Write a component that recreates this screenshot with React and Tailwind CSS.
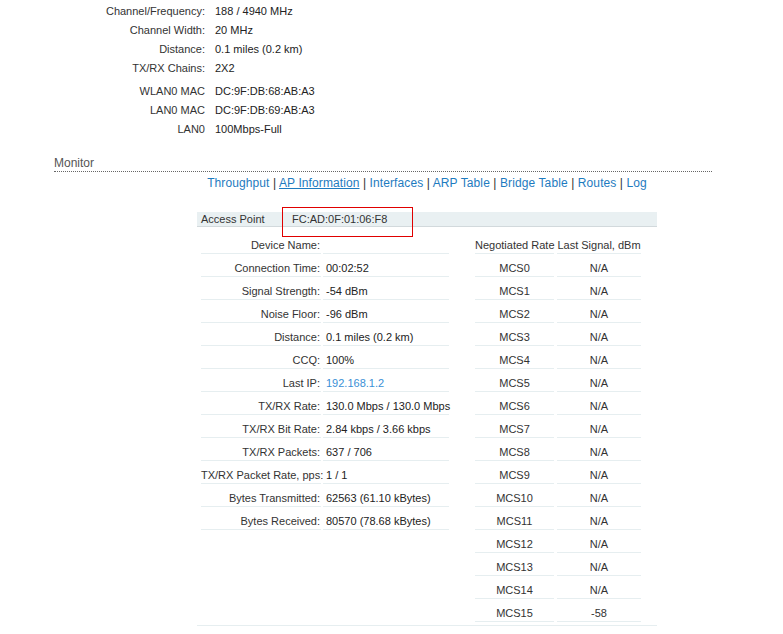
import React from "react";

const topRows = [
  ["Channel/Frequency:", "188 / 4940 MHz"],
  ["Channel Width:", "20 MHz"],
  ["Distance:", "0.1 miles (0.2 km)"],
  ["TX/RX Chains:", "2X2"],
];

const macRows = [
  ["WLAN0 MAC", "DC:9F:DB:68:AB:A3"],
  ["LAN0 MAC", "DC:9F:DB:69:AB:A3"],
  ["LAN0", "100Mbps-Full"],
];

const stationRows = [
  ["Device Name:", ""],
  ["Connection Time:", "00:02:52"],
  ["Signal Strength:", "-54 dBm"],
  ["Noise Floor:", "-96 dBm"],
  ["Distance:", "0.1 miles (0.2 km)"],
  ["CCQ:", "100%"],
  ["Last IP:", "192.168.1.2", true],
  ["TX/RX Rate:", "130.0 Mbps / 130.0 Mbps"],
  ["TX/RX Bit Rate:", "2.84 kbps / 3.66 kbps"],
  ["TX/RX Packets:", "637 / 706"],
  ["TX/RX Packet Rate, pps:", "1 / 1"],
  ["Bytes Transmitted:", "62563 (61.10 kBytes)"],
  ["Bytes Received:", "80570 (78.68 kBytes)"],
];

const rates = Array.from({ length: 16 }, (_, i) => ["MCS" + i, i === 15 ? "-58" : "N/A"]);

const links = ["Throughput", "AP Information", "Interfaces", "ARP Table", "Bridge Table", "Routes", "Log"];

const Cell = ({ className = "", children }) => (
  <div className={"h-[21px] pt-[4px] leading-[16px] border-b border-[#e6eef0] mb-[2px] whitespace-nowrap " + className}>
    {children}
  </div>
);

export default function App() {
  return (
    <div className="font-['Liberation_Sans',Arial,sans-serif] text-[11px] text-[#333] bg-white w-[783px] h-[634px] overflow-hidden">
      {/* device info */}
      <div className="pt-[2px]">
        {topRows.map(([k, v]) => (
          <div key={k} className="flex h-[19px] leading-[19px]">
            <div className="w-[205px] text-right">{k}</div>
            <div className="pl-[10px] text-[#222]">{v}</div>
          </div>
        ))}
        <div className="mt-[4px]">
          {macRows.map(([k, v]) => (
            <div key={k} className="flex h-[19px] leading-[19px]">
              <div className="w-[205px] text-right">{k}</div>
              <div className="pl-[10px] text-[#222]">{v}</div>
            </div>
          ))}
        </div>
      </div>

      {/* monitor */}
      <div className="ml-[54px] w-[658px] mt-[16px]">
        <div className="text-[12px] leading-[16px] text-[#555] border-b border-dotted border-[#666]">Monitor</div>
        <div className="ml-[143px] w-[460px]">
          <div className="mt-[3px] h-[16px] leading-[16px] text-[12px] tracking-[0.1px] text-center whitespace-nowrap">
            {links.map((l, i) => (
              <span key={l}>
                {i > 0 && <span className="text-[#333]"> | </span>}
                <a className={"text-[#1e7bc0] " + (l === "AP Information" ? "underline" : "")}>{l}</a>
              </span>
            ))}
          </div>

          <div className="relative mt-[21px] h-[15px] leading-[14px] bg-[#e9f0f2] border-b border-[#d2d9dc] flex">
            <div className="pl-[4px] w-[95px]">Access Point</div>
            <div>FC:AD:0F:01:06:F8</div>
            <div className="absolute left-[85px] top-[-5px] w-[131px] h-[30px] border border-[#e00000]" />
          </div>

          <div className="mt-[6px] px-[4px] flex border-b border-[#e6eef0] pb-[1px]">
            <div className="w-[248px] flex gap-[2px]">
              <div className="w-[120px]">
                {stationRows.map(([k]) => (
                  <Cell key={k} className="text-right pr-[1px]">{k}</Cell>
                ))}
              </div>
              <div className="w-[126px]">
                {stationRows.map(([k, v, link]) => (
                  <Cell key={k} className={"pl-[3px] " + (link ? "text-[#3a8fd6]" : "text-[#222]")}>{v}</Cell>
                ))}
              </div>
            </div>
            <div className="ml-[26px] flex gap-[3px]">
              <div className="w-[79px] text-center">
                <Cell>Negotiated Rate</Cell>
                {rates.map(([r]) => (
                  <Cell key={r}>{r}</Cell>
                ))}
              </div>
              <div className="w-[84px] text-center">
                <Cell>Last Signal, dBm</Cell>
                {rates.map(([r, v]) => (
                  <Cell key={r}>{v}</Cell>
                ))}
              </div>
            </div>
          </div>
        </div>
      </div>
    </div>
  );
}
